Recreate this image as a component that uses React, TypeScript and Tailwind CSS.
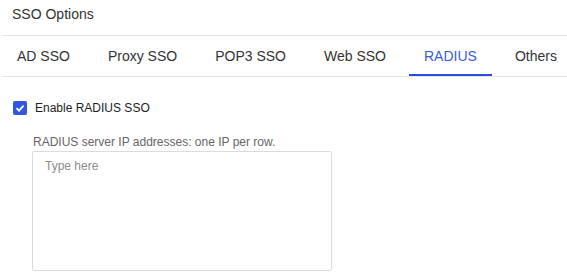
import { useState } from 'react';

const tabs = ['AD SSO', 'Proxy SSO', 'POP3 SSO', 'Web SSO', 'RADIUS', 'Others'];

export default function App() {
  const [active, setActive] = useState('RADIUS');
  const [enabled, setEnabled] = useState(true);

  return (
    <div className="w-[567px] h-[279px] bg-white text-[#333] overflow-hidden" style={{ fontFamily: '"Liberation Sans", Arial, sans-serif' }}>
      <div className="h-[35px] pl-3 pt-[6px] text-[14px] leading-[16px]">SSO Options</div>

      <div className="ml-[2px] flex gap-2 border-y border-[#e3e5ee]">
        {tabs.map((t) => (
          <button
            key={t}
            onClick={() => setActive(t)}
            className={
              t === active
                ? 'shrink-0 whitespace-nowrap h-[40px] px-[15px] text-[14px] text-[#3a5ae0] border-b-2 border-[#2a4bdb] pt-[2px]'
                : 'shrink-0 whitespace-nowrap h-[40px] px-[15px] text-[14px] text-[#333] border-b-2 border-transparent pt-[2px]'
            }
          >
            {t}
          </button>
        ))}
      </div>

      <label className="mt-[24px] ml-[13px] flex items-center gap-[8px] text-[12px] leading-[14px] text-[#222] cursor-pointer">
        <span
          onClick={() => setEnabled(!enabled)}
          className={
            enabled
              ? 'w-[14px] h-[14px] rounded-[2px] bg-[#3157e0] flex items-center justify-center'
              : 'w-[14px] h-[14px] rounded-[2px] border border-[#bbb] bg-white flex items-center justify-center'
          }
        >
          {enabled && (
            <svg width="10" height="10" viewBox="0 0 10 10">
              <path d="M1.5 5.2 L4 7.6 L8.6 2.6" fill="none" stroke="white" strokeWidth="1.8" />
            </svg>
          )}
        </span>
        Enable RADIUS SSO
      </label>

      <div className="ml-[32px] mt-[20px] w-[300px]">
        <div className="text-[12px] leading-[14px] text-[#666] pl-[1px]">RADIUS server IP addresses: one IP per row.</div>
        <textarea
          placeholder="Type here"
          className="mt-[2px] block w-[300px] h-[120px] resize-none border border-[#dcdcdc] rounded-[2px] px-[12px] py-[6px] text-[12px] leading-[16px] placeholder:text-[#8c8c8c] outline-none"
        />
      </div>
    </div>
  );
}
